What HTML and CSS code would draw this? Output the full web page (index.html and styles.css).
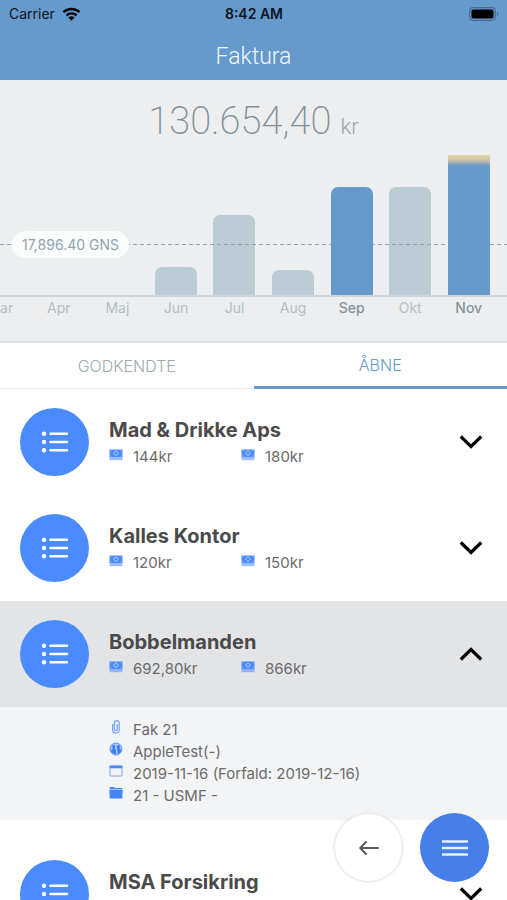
FILE: index.html
```html
<!DOCTYPE html>
<html lang="da">
<head>
  <meta charset="UTF-8" />
  <meta name="viewport" content="width=device-width, initial-scale=1" />
  <title>Faktura</title>
  <link rel="stylesheet" href="styles.css">
</head>
<body>
  <!-- shared icons -->
  <svg class="icon-defs" aria-hidden="true">
    <symbol id="icon-list" viewBox="0 0 28 22">
      <g fill="currentColor">
        <circle cx="3" cy="2.700" r="2.200" />
        <circle cx="3" cy="11" r="2.200" />
        <circle cx="3" cy="19.300" r="2.200" />
      </g>
      <path d="M9.500 2.700H26M9.500 11H26M9.500 19.300H26" stroke="currentColor" stroke-width="2.400" stroke-linecap="round" />
    </symbol>
    <symbol id="icon-cash" viewBox="0 0 14 12">
      <rect x="0.500" y="0.500" width="13" height="7.500" fill="currentColor" />
      <path d="M7 1.800L9.500 4.200L7 6.600L4.500 4.200Z" fill="none" stroke="#b9d3ff" stroke-width="1" />
      <path d="M1 2.500L2.500 1M13 2.500L11.500 1M1 6L2.500 7.500M13 6L11.500 7.500" stroke="#9cc0ff" stroke-width="0.700" />
      <rect x="0.500" y="8" width="13" height="3.200" fill="currentColor" opacity="0.550" />
    </symbol>
    <symbol id="icon-chevron" viewBox="0 0 24 14">
      <path d="M1.800 1.500L12 11.500L22.200 1.500" fill="none" stroke="currentColor" stroke-width="3.200" />
    </symbol>
  </svg>

  <div class="app">
    <header class="header">
      <div class="status-bar">
        <div class="carrier">
          <span>Carrier</span>
          <svg class="wifi" viewBox="0 0 18 14" aria-hidden="true">
            <path d="M1 5.200A11.500 11.500 0 0 1 17 5.200" fill="none" stroke="#000" stroke-width="2.400" />
            <path d="M3.900 8.400A7.400 7.400 0 0 1 14.100 8.400" fill="none" stroke="#000" stroke-width="2.200" />
            <path d="M9 13.800L5.900 10.600A4.500 4.500 0 0 1 12.100 10.600Z" fill="#000" />
          </svg>
        </div>
        <div class="clock">8:42 AM</div>
        <svg class="battery" viewBox="0 0 30 14" aria-hidden="true">
          <rect x="0.700" y="0.700" width="25.600" height="12.600" rx="3.500" fill="none" stroke="#4a6c8f" stroke-width="1.200" />
          <rect x="2.500" y="2.500" width="22" height="9" rx="1.800" fill="#000" />
          <path d="M28 4.800C29.800 5.500 29.800 8.500 28 9.200Z" fill="#4a6c8f" />
        </svg>
      </div>
      <h1>Faktura</h1>
    </header>

    <section class="summary">
      <p class="total">130.654,40 <span class="currency">kr</span></p>
      <div class="chart">
        <div class="average"><span class="average-label">17,896.40 GNS</span></div>
        <div class="bars">
          <div class="bar-slot"></div>
          <div class="bar-slot"></div>
          <div class="bar-slot"></div>
          <div class="bar-slot"><div class="bar" style="height: 20%"></div></div>
          <div class="bar-slot"><div class="bar" style="height: 57%"></div></div>
          <div class="bar-slot"><div class="bar" style="height: 18%"></div></div>
          <div class="bar-slot"><div class="bar active" style="height: 77%"></div></div>
          <div class="bar-slot"><div class="bar" style="height: 77%"></div></div>
          <div class="bar-slot"><div class="bar active over" style="height: 100%"></div></div>
        </div>
      </div>
      <div class="months">
        <span>Mar</span>
        <span>Apr</span>
        <span>Maj</span>
        <span>Jun</span>
        <span>Jul</span>
        <span>Aug</span>
        <span class="active">Sep</span>
        <span>Okt</span>
        <span class="active">Nov</span>
      </div>
    </section>

    <nav class="tabs">
      <button class="tab" type="button">GODKENDTE</button>
      <button class="tab selected" type="button">ÅBNE</button>
    </nav>

    <main class="invoices">
      <article class="invoice">
        <div class="avatar"><svg><use href="#icon-list" /></svg></div>
        <div class="info">
          <h2>Mad &amp; Drikke Aps</h2>
          <div class="amounts">
            <span class="line"><svg><use href="#icon-cash" /></svg>144kr</span>
            <span class="line"><svg><use href="#icon-cash" /></svg>180kr</span>
          </div>
        </div>
        <button class="toggle" type="button" aria-label="Vis detaljer"><svg><use href="#icon-chevron" /></svg></button>
      </article>

      <article class="invoice">
        <div class="avatar"><svg><use href="#icon-list" /></svg></div>
        <div class="info">
          <h2>Kalles Kontor</h2>
          <div class="amounts">
            <span class="line"><svg><use href="#icon-cash" /></svg>120kr</span>
            <span class="line"><svg><use href="#icon-cash" /></svg>150kr</span>
          </div>
        </div>
        <button class="toggle" type="button" aria-label="Vis detaljer"><svg><use href="#icon-chevron" /></svg></button>
      </article>

      <article class="invoice open">
        <div class="avatar"><svg><use href="#icon-list" /></svg></div>
        <div class="info">
          <h2>Bobbelmanden</h2>
          <div class="amounts">
            <span class="line"><svg><use href="#icon-cash" /></svg>692,80kr</span>
            <span class="line"><svg><use href="#icon-cash" /></svg>866kr</span>
          </div>
        </div>
        <button class="toggle" type="button" aria-label="Skjul detaljer"><svg><use href="#icon-chevron" /></svg></button>
      </article>
      <div class="details">
        <div class="line">
          <svg viewBox="0 0 14 14"><path d="M3.600 4V9.800A3.300 3.300 0 0 0 10.200 9.800V3A2.400 2.400 0 0 0 5.400 3V9.200A1.400 1.400 0 0 0 8.200 9.200V4" fill="none" stroke="#6fa0f8" stroke-width="1.200" /></svg>
          Fak 21
        </div>
        <div class="line">
          <svg viewBox="0 0 14 14">
            <circle cx="7" cy="7" r="6" fill="#a5c4fb" stroke="#4a8bff" stroke-width="0.900" />
            <path d="M3.200 4Q4.800 2.200 6.200 4L5.800 6.500L7 8V12Q3.500 12 1.800 8.800L3.800 7.200Z" fill="#3a7bf2" />
            <path d="M7.800 4.500A1.600 1.600 0 0 1 11 4.500L10.500 6.500L12.300 8.200Q11.500 11 8.800 12L8.300 8Z" fill="#3a7bf2" />
          </svg>
          AppleTest(-)
        </div>
        <div class="line">
          <svg viewBox="0 0 14 14"><rect x="1" y="2" width="12" height="10" rx="0.800" fill="none" stroke="#76a6fb" stroke-width="1" /><path d="M0.600 1.600H13.400V4.300H0.600Z" fill="#4a8bff" /></svg>
          2019-11-16 (Forfald: 2019-12-16)
        </div>
        <div class="line">
          <svg viewBox="0 0 14 14"><path d="M0.600 1H5L6.200 2.100H13.200V3.600H0.600Z" fill="#4a8bff" /><path d="M0.300 4.100H13.700L13.300 12.500H0.800Z" fill="#4385fb" /></svg>
          21 - USMF -
        </div>
      </div>

      <article class="invoice">
        <div class="avatar"><svg><use href="#icon-list" /></svg></div>
        <div class="info">
          <h2>MSA Forsikring</h2>
          <div class="amounts">
            <span class="line"><svg><use href="#icon-cash" /></svg></span>
            <span class="line"><svg><use href="#icon-cash" /></svg></span>
          </div>
        </div>
        <button class="toggle" type="button" aria-label="Vis detaljer"><svg><use href="#icon-chevron" /></svg></button>
      </article>
    </main>

    <div class="actions">
      <button class="fab back" type="button" aria-label="Tilbage">
        <svg viewBox="0 0 20 14"><path d="M19 7H1.500M7 1L1.200 7L7 13" fill="none" stroke="#555" stroke-width="1.800" stroke-linecap="round" stroke-linejoin="round" /></svg>
      </button>
      <button class="fab menu" type="button" aria-label="Menu">
        <svg viewBox="0 0 26 16"><path d="M0 1.500H26M0 8H26M0 14.500H26" stroke="#e8f1ff" stroke-width="2.600" /></svg>
      </button>
    </div>
  </div>
</body>
</html>
```

FILE: styles.css
```css
* {
  box-sizing: border-box;
}

body {
  margin: 0;
  font-family: Inter, "Liberation Sans", sans-serif;
  font-size: 14px;
  color: #666;
  background-color: #fff;
}

h1, h2, p {
  margin: 0;
}

button {
  font: inherit;
  padding: 0;
  border: none;
  background: none;
  cursor: pointer;
}

.icon-defs {
  display: none;
}

.app {
  display: flex;
  flex-direction: column;
  height: 100vh;
  overflow: hidden;
}

/* header */
.header {
  background-color: #6699cc;
  padding-bottom: 8px;
}

.status-bar {
  display: grid;
  grid-template-columns: 1fr auto 1fr;
  align-items: center;
  height: 27px;
  padding: 0 8px 0 9px;
  color: #0c1620;
}

.carrier {
  display: flex;
  align-items: center;
  gap: 7px;
}

.wifi {
  width: 19px;
  height: 14px;
}

.clock {
  font-weight: 600;
}

.battery {
  width: 30px;
  height: 14px;
  justify-self: end;
}

.header h1 {
  padding-top: 15px;
  font-family: Roboto, "Liberation Sans", sans-serif;
  font-size: 23px;
  line-height: 30px;
  font-weight: 300;
  text-align: center;
  color: #f2f7fc;
}

/* total and chart */
.summary {
  height: 263px;
  flex: none;
  overflow: hidden;
  background-color: #eceef0;
  border-bottom: 2px solid #dfe2e4;
}

.total {
  padding-top: 16px;
  font-family: Roboto, "Liberation Sans", sans-serif;
  font-size: 38px;
  line-height: 50px;
  font-weight: 200;
  text-align: center;
  color: #7f9099;
}

.currency {
  font-size: 22px;
  line-height: 1;
  font-weight: 300;
  color: #9aa8af;
}

.chart {
  position: relative;
  margin-top: 9px;
  border-bottom: 2px solid #cbd7dc;
}

.bars, .months {
  display: grid;
  grid-template-columns: repeat(9, 1fr);
  margin: 0 9px 0 -29px;
}

.bars {
  height: 140px;
}

.bar-slot {
  display: flex;
  align-items: flex-end;
  justify-content: center;
}

.bar {
  width: 42px;
  border-radius: 7px 7px 0 0;
  background-color: #bbccd5;
}

.bar.active {
  position: relative;
  z-index: 2;
  background-color: #6699cc;
}

.bar.over {
  border-radius: 0;
  background-image: linear-gradient(#e6d2a6, #cfc4a6 5px, #6699cc 11px);
}

/* dashed line lies over the pale bars */
.average {
  position: absolute;
  z-index: 1;
  left: 0;
  right: 0;
  bottom: 37px;
  height: 27px;
  padding-left: 12px;
  background: repeating-linear-gradient(90deg, #93a2ae 0 4px, transparent 4px 7px) 0 13px / 100% 1px no-repeat;
}

.average-label {
  display: inline-block;
  padding: 0 10px;
  border-radius: 14px;
  line-height: 27px;
  background-color: #fbfcfc;
  color: #8fa3ae;
}

.months {
  margin-top: 1px;
  line-height: 20px;
  text-align: center;
  color: #b2bfc6;
}

.months .active {
  color: #84949d;
  font-weight: 500;
}

/* tabs */
.tabs {
  display: flex;
  flex: none;
  height: 46px;
}

.tab {
  flex: 1;
  font-size: 16px;
  font-weight: 300;
  color: #9caab1;
  border-bottom: 1px solid #e8ebed;
}

.tab.selected {
  color: #6699cc;
  border-bottom: 3px solid #6699cc;
}

/* invoice list */
.invoices {
  flex: 1;
  min-height: 0;
  overflow-y: auto;
  scrollbar-width: none;
}

.invoice {
  display: flex;
  align-items: center;
  padding: 19px 24px 19px 20px;
}

.invoice.open {
  background-color: #e2e4e6;
}

.avatar {
  display: flex;
  align-items: center;
  justify-content: center;
  flex: none;
  width: 69px;
  height: 68px;
  border-radius: 50%;
  color: #fff;
  background-color: #4a8bff;
}

.avatar svg {
  width: 28px;
  height: 22px;
}

.info {
  flex: 1;
  margin-left: 20px;
}

.info h2 {
  margin-bottom: 2px;
  font-size: 20px;
  line-height: 28px;
  font-weight: 700;
  color: #4a4a4a;
}

.amounts {
  display: grid;
  grid-template-columns: 132px 1fr;
}

.line {
  display: flex;
  gap: 10px;
  min-height: 22px;
  font-size: 15px;
  line-height: 22px;
  color: #6b6b6b;
}

.line svg {
  flex: none;
  width: 14px;
  height: 14px;
  margin-top: 2px;
  color: #4a8bff;
}

.toggle {
  width: 24px;
  height: 24px;
  color: #000;
}

.toggle svg {
  display: block;
  width: 24px;
  height: 14px;
  margin: 5px 0;
}

.open .toggle svg {
  transform: rotate(180deg);
}

.details {
  margin-bottom: 21px;
  padding: 12px 24px 13px 109px;
  background-color: #f3f4f6;
}

.details .line svg {
  margin-top: 1px;
}

/* floating buttons */
.actions {
  position: fixed;
  right: 18px;
  bottom: 18px;
  display: flex;
  align-items: center;
  gap: 17px;
}

.fab {
  display: flex;
  align-items: center;
  justify-content: center;
  width: 69px;
  height: 69px;
  border-radius: 50%;
}

.fab.back {
  background-color: #fff;
  border: 1px solid #e6e8ea;
  box-shadow: 0 0 3px #e2e4e6;
}

.fab.menu {
  background-color: #467fe8;
}

.back svg {
  width: 20px;
  height: 14px;
}

.menu svg {
  width: 26px;
  height: 16px;
}
```
